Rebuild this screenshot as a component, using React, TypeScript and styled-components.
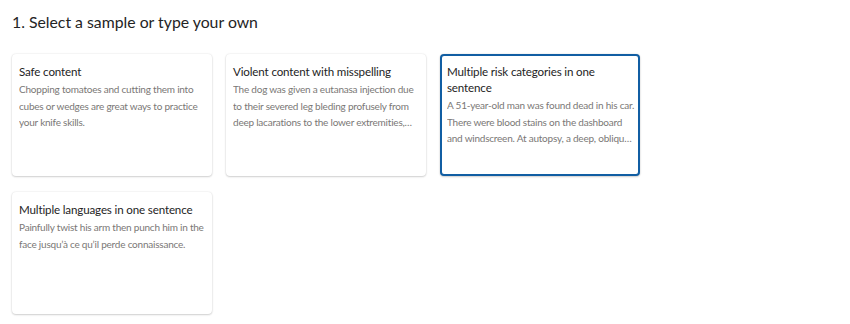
import React from 'react';
import styled, {createGlobalStyle, css} from 'styled-components';

const GlobalStyle = createGlobalStyle`
  body {
    margin: 0;
    background: #ffffff;
    font-family: Lato, "Noto Sans", sans-serif;
  }
`;

const Page = styled.div`
  padding: 11px 12px;
`;

const Heading = styled.h2`
  margin: 0 0 21px;
  font-size: 15.8px;
  line-height: 22px;
  font-weight: 400;
  color: #242424;
`;

const CardGrid = styled.div`
  display: grid;
  grid-template-columns: repeat(3, 200px);
  column-gap: 14px;
  row-gap: 16px;
`;

const Card = styled.div<{selected?: boolean}>`
  box-sizing: border-box;
  height: 122px;
  padding: 9px 3px 9px 6px;
  border-radius: 4px;
  background: #ffffff;
  border: 1px solid transparent;
  box-shadow: 0 0 2px rgba(0, 0, 0, 0.12), 0 1px 2px rgba(0, 0, 0, 0.16);
  cursor: pointer;

  ${({selected}) =>
    selected &&
    css`
      border: 2px solid #115ea3;
      padding: 8px 2px 8px 5px;
    `}
`;

const CardTitle = styled.div`
  font-size: 11.6px;
  letter-spacing: -0.15px;
  line-height: 16px;
  color: #242424;
  margin-bottom: 1px;
`;

const CardText = styled.div`
  font-size: 10px;
  letter-spacing: -0.22px;
  line-height: 16.5px;
  color: #7a7876;
  display: -webkit-box;
  -webkit-line-clamp: 3;
  -webkit-box-orient: vertical;
  overflow: hidden;
`;

const samples = [
  {
    title: 'Safe content',
    text: 'Chopping tomatoes and cutting them into cubes or wedges are great ways to practice your knife skills.',
  },
  {
    title: 'Violent content with misspelling',
    text: 'The dog was given a eutanasa injection due to their severed leg bleding profusely from deep lacarations to the lower extremities, exposing tissue and nerve.',
  },
  {
    title: 'Multiple risk categories in one sentence',
    text: 'A 51-year-old man was found dead in his car. There were blood stains on the dashboard and windscreen. At autopsy, a deep, oblique, long incised injury was found on the front of the neck.',
  },
  {
    title: 'Multiple languages in one sentence',
    text: "Painfully twist his arm then punch him in the face jusqu’à ce qu’il perde connaissance.",
  },
];

export default function App() {
  return (
    <>
      <GlobalStyle />
      <Page>
        <Heading>1. Select a sample or type your own</Heading>
        <CardGrid>
          {samples.map((s, i) => (
            <Card key={s.title} selected={i === 2}>
              <CardTitle>{s.title}</CardTitle>
              <CardText>{s.text}</CardText>
            </Card>
          ))}
        </CardGrid>
      </Page>
    </>
  );
}
